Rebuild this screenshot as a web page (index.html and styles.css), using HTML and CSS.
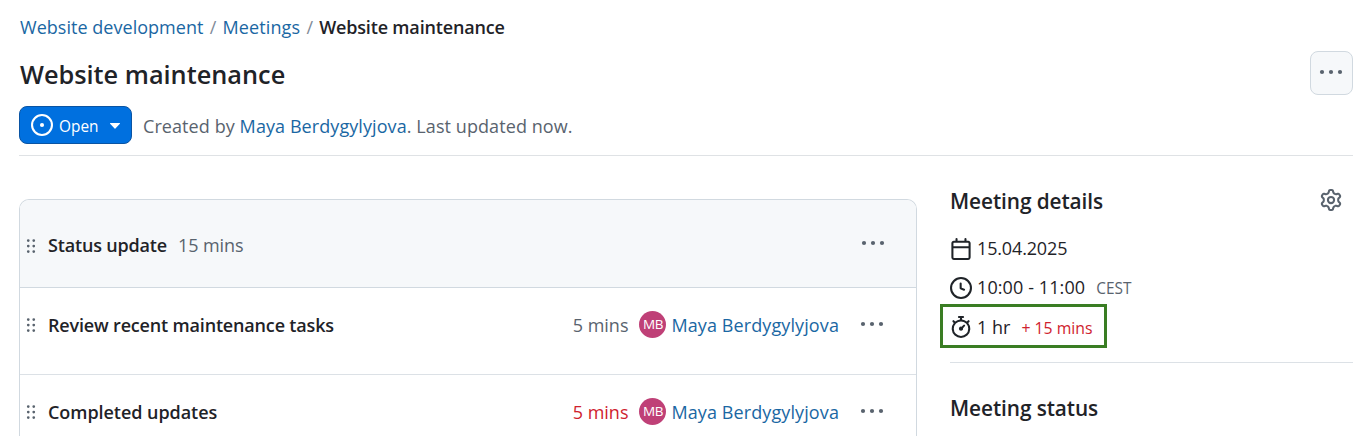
FILE: index.html
```html
<!DOCTYPE html>
<html lang="en">
<head>
<meta charset="utf-8">
<title>Website maintenance</title>
<link rel="stylesheet" href="styles.css">
</head>
<body>
<svg class="sprite" aria-hidden="true">
  <symbol id="grip" viewBox="0 0 16 16"><path d="M10 13a1 1 0 1 1 0-2 1 1 0 0 1 0 2Zm0-4a1 1 0 1 1 0-2 1 1 0 0 1 0 2Zm-4 4a1 1 0 1 1 0-2 1 1 0 0 1 0 2Zm5-9a1 1 0 1 1-2 0 1 1 0 0 1 2 0ZM7 8a1 1 0 1 1-2 0 1 1 0 0 1 2 0ZM6 5a1 1 0 1 1 0-2 1 1 0 0 1 0 2Z"/></symbol>
  <symbol id="dots" viewBox="0 0 24 6"><circle cx="3" cy="3" r="2.1"/><circle cx="12" cy="3" r="2.1"/><circle cx="21" cy="3" r="2.1"/></symbol>
</svg>
<div class="page">
  <nav class="breadcrumb">
    <a class="link development">Website development</a><span class="slash">/</span><a class="link meetings">Meetings</a><span class="slash">/</span><b class="strong">Website maintenance</b>
  </nav>
  <header class="title-row">
    <h1 class="title">Website maintenance</h1>
    <button class="more-button"><svg class="dots"><use href="#dots"/></svg></button>
  </header>
  <div class="state-row">
    <button class="state-button">
      <svg class="icon" viewBox="0 0 16 16"><path d="M8 9.5a1.5 1.5 0 1 0 0-3 1.5 1.5 0 0 0 0 3Z"/><path d="M8 0a8 8 0 1 1 0 16A8 8 0 0 1 8 0ZM1.5 8a6.5 6.5 0 1 0 13 0 6.5 6.5 0 0 0-13 0Z"/></svg>
      <span class="state-label">Open</span>
      <svg class="caret" viewBox="0 0 10 6"><path d="M.4 0h9.2a.4.4 0 0 1 .3.7L5.4 5.6a.55.55 0 0 1-.8 0L.1.7A.4.4 0 0 1 .4 0Z"/></svg>
    </button>
    <p class="created">Created by <a class="link">Maya Berdygylyjova</a>. Last updated now.</p>
  </div>
  <div class="columns">
    <main class="agenda">
      <div class="section-head">
        <svg class="grip"><use href="#grip"/></svg>
        <b class="strong">Status update</b>
        <span class="muted section-time">15 mins</span>
        <svg class="dots dots-end"><use href="#dots"/></svg>
      </div>
      <div class="item first">
        <svg class="grip"><use href="#grip"/></svg>
        <b class="strong item-title">Review recent maintenance tasks</b>
        <span class="muted mins">5 mins</span>
        <span class="avatar">MB</span>
        <a class="link name">Maya Berdygylyjova</a>
        <svg class="dots"><use href="#dots"/></svg>
      </div>
      <div class="item last">
        <svg class="grip"><use href="#grip"/></svg>
        <b class="strong item-title wide">Completed updates</b>
        <span class="danger mins">5 mins</span>
        <span class="avatar">MB</span>
        <a class="link name">Maya Berdygylyjova</a>
        <svg class="dots"><use href="#dots"/></svg>
      </div>
    </main>
    <aside class="side">
      <div class="side-head">
        <h2 class="side-title">Meeting details</h2>
        <svg class="icon gear" viewBox="0 0 16 16"><path d="M8 0a8.2 8.2 0 0 1 .701.031C9.444.095 9.99.645 10.16 1.29l.288 1.107c.018.066.079.158.212.224.231.114.454.243.668.386.123.082.233.09.299.071l1.103-.303c.644-.176 1.392.021 1.82.63.27.385.506.792.704 1.218.315.675.111 1.422-.364 1.891l-.814.806c-.049.048-.098.147-.088.294.016.257.016.515 0 .772-.01.147.038.246.088.294l.814.806c.475.469.679 1.216.364 1.891a7.977 7.977 0 0 1-.704 1.217c-.428.61-1.176.807-1.82.63l-1.102-.302c-.067-.019-.177-.011-.3.071a5.909 5.909 0 0 1-.668.386c-.133.066-.194.158-.211.224l-.29 1.106c-.168.646-.715 1.196-1.458 1.26a8.006 8.006 0 0 1-1.402 0c-.743-.064-1.289-.614-1.458-1.26l-.289-1.106c-.018-.066-.079-.158-.212-.224a5.738 5.738 0 0 1-.668-.386c-.123-.082-.233-.09-.299-.071l-1.103.303c-.644.176-1.392-.021-1.82-.63a8.12 8.12 0 0 1-.704-1.218c-.315-.675-.111-1.422.363-1.891l.815-.806c.05-.048.098-.147.088-.294a6.214 6.214 0 0 1 0-.772c.01-.147-.038-.246-.088-.294l-.815-.806C.635 6.045.431 5.298.746 4.623a7.92 7.92 0 0 1 .704-1.217c.428-.61 1.176-.807 1.82-.63l1.102.302c.067.019.177.011.3-.071.214-.143.437-.272.668-.386.133-.066.194-.158.211-.224l.29-1.106C6.009.645 6.556.095 7.299.03 7.53.01 7.764 0 8 0Zm-.571 1.525c-.036.003-.108.036-.137.146l-.289 1.105c-.147.561-.549.967-.998 1.189-.173.086-.34.183-.5.29-.417.278-.97.423-1.529.27l-1.103-.303c-.109-.03-.175.016-.195.045-.22.312-.412.644-.573.99-.014.031-.021.11.059.19l.815.806c.411.406.562.957.53 1.456a4.709 4.709 0 0 0 0 .582c.032.499-.119 1.05-.53 1.456l-.815.806c-.081.08-.073.159-.059.19.162.346.353.677.573.989.02.03.085.076.195.046l1.102-.303c.56-.153 1.113-.008 1.53.27.161.107.328.204.501.29.447.222.85.629.997 1.189l.289 1.105c.029.109.101.143.137.146a6.6 6.6 0 0 0 1.142 0c.036-.003.108-.036.137-.146l.289-1.105c.147-.561.549-.967.998-1.189.173-.086.34-.183.5-.29.417-.278.97-.423 1.529-.27l1.103.303c.109.029.175-.016.195-.045.22-.313.411-.644.573-.99.014-.031.021-.11-.059-.19l-.815-.806c-.411-.406-.562-.957-.53-1.456a4.709 4.709 0 0 0 0-.582c-.032-.499.119-1.05.53-1.456l.815-.806c.081-.08.073-.159.059-.19a6.464 6.464 0 0 0-.573-.989c-.02-.03-.085-.076-.195-.046l-1.102.303c-.56.153-1.113.008-1.53-.27a4.44 4.44 0 0 0-.501-.29c-.447-.222-.85-.629-.997-1.189l-.289-1.105c-.029-.11-.101-.143-.137-.146a6.6 6.6 0 0 0-1.142 0ZM11 8a3 3 0 1 1-6 0 3 3 0 0 1 6 0ZM9.5 8a1.5 1.5 0 1 0-3.001.001A1.5 1.5 0 0 0 9.5 8Z"/></svg>
      </div>
      <div class="detail date">
        <svg class="icon" viewBox="0 0 16 16"><path d="M4.75 0a.75.75 0 0 1 .75.75V2h5V.75a.75.75 0 0 1 1.5 0V2h1.25c.966 0 1.75.784 1.75 1.75v10.5A1.75 1.75 0 0 1 13.25 16H2.75A1.75 1.75 0 0 1 1 14.25V3.75C1 2.784 1.784 2 2.75 2H4V.75A.75.75 0 0 1 4.75 0ZM2.5 7.5v6.75c0 .138.112.25.25.25h10.5a.25.25 0 0 0 .25-.25V7.5Zm10.75-4H2.75a.25.25 0 0 0-.25.25V6h11V3.75a.25.25 0 0 0-.25-.25Z"/></svg>
        <span class="date-text">15.04.2025</span>
      </div>
      <div class="detail time">
        <svg class="icon" viewBox="0 0 16 16"><path d="M8 0a8 8 0 1 1 0 16A8 8 0 0 1 8 0ZM1.5 8a6.5 6.5 0 1 0 13 0 6.5 6.5 0 0 0-13 0Zm7-3.25v2.992l2.028.812a.75.75 0 0 1-.557 1.392l-2.5-1A.751.751 0 0 1 7 8.25v-3.5a.75.75 0 0 1 1.5 0Z"/></svg>
        <span class="time-text">10:00 - 11:00</span><span class="zone">CEST</span>
      </div>
      <div class="detail duration">
        <svg class="icon" viewBox="0 0 16 16"><path d="M5.75.75A.75.75 0 0 1 6.5 0h3a.75.75 0 0 1 0 1.5h-.75v1l-.001.041a6.724 6.724 0 0 1 3.464 1.435l.007-.006.75-.75a.749.749 0 0 1 1.275.326.749.749 0 0 1-.215.734l-.75.75-.006.007a6.75 6.75 0 1 1-10.548 0L2.72 5.03l-.75-.75a.751.751 0 0 1 .018-1.042.751.751 0 0 1 1.042-.018l.75.75.007.006A6.72 6.72 0 0 1 7.25 2.541V1.5H6.5a.75.75 0 0 1-.75-.75ZM8 14.5a5.25 5.25 0 1 0 0-10.5 5.25 5.25 0 0 0 0 10.5Zm.389-6.7 1.33-1.33a.75.75 0 1 1 1.061 1.06L9.45 8.861A1.503 1.503 0 0 1 8 10.75a1.499 1.499 0 1 1 .389-2.95Z"/></svg>
        <span>1 hr</span><span class="over">+ 15 mins</span>
      </div>
      <div class="status">
        <h2 class="side-title">Meeting status</h2>
      </div>
    </aside>
  </div>
</div>
</body>
</html>
```
FILE: styles.css
```css
* { box-sizing: border-box; }
body {
  margin: 0;
  background: #fff;
  color: #1f2328;
  font: 18px/26px "Open Sans", "Noto Sans", sans-serif;
}
.sprite { display: none; }
.page { padding: 0 18px 0 19px; }
h1, h2, p { margin: 0; }
svg { display: block; flex: none; fill: currentColor; }
.link { color: #1a67a3; }
.muted { color: #59636e; }
.danger { color: #cf222e; }
.strong { font-weight: 600; letter-spacing: -0.17px; }
.icon { width: 22px; height: 22px; }
.dots { width: 24px; height: 6px; color: #59636e; }
.grip { width: 22px; height: 22px; color: #59636e; }

.breadcrumb { display: flex; height: 51px; padding: 14px 0 0 1px; }
.development { letter-spacing: 0.03px; }
.meetings { letter-spacing: 0.12px; }
.slash { width: 19px; text-align: center; color: #818b98; }

.title-row { display: flex; justify-content: space-between; height: 55px; }
.title { padding: 6px 0 0 1px; font-size: 25.3px; line-height: 34px; font-weight: 600; }
.more-button {
  display: flex; align-items: center; justify-content: center;
  width: 43px; height: 44px; padding: 0 1px 2px 0;
  border: 1px solid #d1d9e0; border-radius: 8px; background: #f6f8fa;
}

.state-row { display: flex; height: 50px; border-bottom: 1px solid #dfe2e5; }
.state-button {
  display: flex; align-items: center;
  width: 113px; height: 38px; padding: 0 0 0 11px;
  border: 1px solid #0a54a3; border-radius: 8px;
  background: #0070df; color: #fff; font-family: inherit;
}
.state-label { margin: 3px 0 0 6px; font-size: 15.4px; line-height: 22px; }
.caret { width: 10px; height: 6px; margin: 2px 0 0 11.5px; }
.created { padding: 7px 0 0 11px; color: #59636e; letter-spacing: 0.08px; }

.columns { display: flex; gap: 33px; }
.agenda {
  width: 898px; margin-top: 43px;
  border: 1px solid #d1d9e0; border-bottom: 0;
  border-radius: 10px 10px 0 0; overflow: hidden;
}
.section-head {
  display: flex; align-items: center;
  height: 88px; padding: 2px 31px 0 0;
  border-bottom: 1px solid #d1d9e0; background: #f6f8fa;
}
.section-time { margin-left: 11px; letter-spacing: -0.1px; }
.grip { margin-right: 6px; }
.section-head .grip { margin-top: 2px; }
.dots-end { margin: 0 0 3px auto; }
.item {
  display: flex; align-items: center;
  height: 87px; padding: 0 32px 12px 0;
  border-bottom: 1px solid #dce1e6;
}
.first { border-radius: 9px 9px 0 0; }
.last { height: 61px; padding: 13px 32px 0 0; border-bottom: 0; }
.item-title { margin-right: auto; }
.wide { letter-spacing: -0.05px; }
.avatar {
  width: 27px; height: 27px; margin: 0 5px 1px 11px;
  border-radius: 50%; background: #bf4077; color: #fff;
  font-size: 13.5px; line-height: 27px; text-align: center; letter-spacing: -0.4px;
}
.name { margin-right: 21px; letter-spacing: 0.1px; }
.item .dots { margin-bottom: 2px; }

.side { flex: 1; }
.side-head { display: flex; justify-content: space-between; height: 74px; padding: 31px 11px 0 0; }
.side-title { font-size: 20.8px; line-height: 28px; font-weight: 600; letter-spacing: -0.08px; }
.gear { color: #59636e; margin-top: 2px; }
.detail { display: flex; align-items: center; gap: 5px; }
.date { height: 38px; }
.date-text { margin-bottom: 2px; letter-spacing: -0.15px; }
.time { height: 36px; margin-top: 2px; }
.time-text { margin-bottom: 2px; letter-spacing: 0.1px; }
.zone { margin: 1px 0 0 6px; font-size: 15.4px; color: #59636e; }
.duration {
  width: 167px; height: 44px; margin: -2px 0 14px -10px; padding: 2px 0 0 7px;
  border: 3px solid #3a7d23;
}
.duration span { margin-bottom: 1px; }
.duration .over { margin: 1px 0 0 6px; font-size: 15.8px; color: #cf222e; }
.status { padding-top: 31px; border-top: 1px solid #dce1e6; }
```
